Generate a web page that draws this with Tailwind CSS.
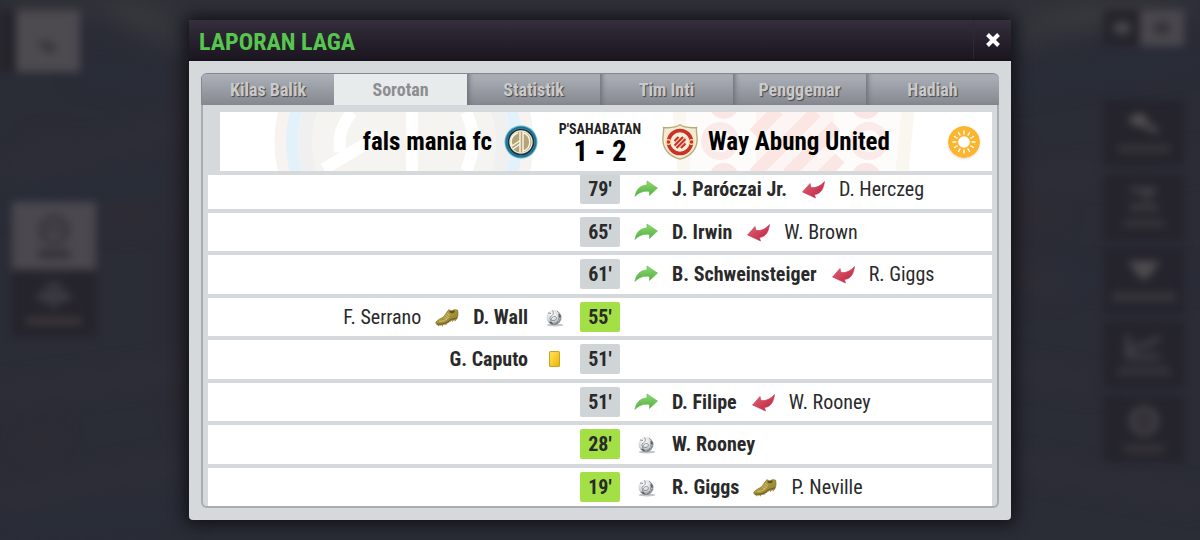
<!DOCTYPE html>
<html lang="id">
<head>
    <meta charset="UTF-8">
    <meta name="viewport" content="width=device-width, initial-scale=1.0">
    <title>Laporan Laga</title>
    <script src="https://cdn.jsdelivr.net/npm/@tailwindcss/browser@4"></script>
</head>
<body class="relative min-h-screen overflow-hidden bg-[#2a2c36] font-['Liberation_Sans_Narrow','Roboto_Condensed','Arial_Narrow',sans-serif]">

    <!-- icon symbols -->
    <svg class="absolute size-0" aria-hidden="true">
        <defs>
            <linearGradient id="g-green" x1="0" y1="0" x2="0" y2="1">
                <stop offset="0" stop-color="#8edb6c"/><stop offset="1" stop-color="#4fae3f"/>
            </linearGradient>
            <linearGradient id="g-red" x1="0" y1="0" x2="1" y2="1">
                <stop offset="0" stop-color="#e8637a"/><stop offset="1" stop-color="#b81f3c"/>
            </linearGradient>
            <linearGradient id="g-card" x1="0" y1="0" x2="1" y2="1">
                <stop offset="0" stop-color="#ffe45c"/><stop offset="1" stop-color="#f0b400"/>
            </linearGradient>
            <linearGradient id="g-boot" x1="0" y1="0" x2="1" y2="1">
                <stop offset="0" stop-color="#c0ad50"/><stop offset="1" stop-color="#8a7727"/>
            </linearGradient>
            <radialGradient id="g-ball" cx=".4" cy=".3" r=".75">
                <stop offset="0" stop-color="#fff"/><stop offset=".6" stop-color="#d4d6d9"/><stop offset="1" stop-color="#6d7076"/>
            </radialGradient>
        </defs>
        <symbol id="in" viewBox="0 0 24 24">
            <path d="M1 19.500C2 12.500 6 8.500 13 8V4L23.500 11L15.500 18.500V14.500C9.500 13.500 4.500 15.500 1 19.500Z" fill="url(#g-green)" stroke="#62b552" stroke-width=".6"/>
        </symbol>
        <symbol id="out" viewBox="0 0 24 24">
            <path d="M23.500 4.500C22.500 13 19 17 13.500 17.500L14.500 21L1.500 15L9 6.500L10 10.500C15 11 19.500 9 23.500 4.500Z" fill="url(#g-red)" stroke="#c04258" stroke-width=".6"/>
        </symbol>
        <symbol id="ball" viewBox="0 0 24 24">
            <ellipse cx="13" cy="20" rx="8.500" ry="1.500" fill="#9a9da0" opacity=".6"/>
            <circle cx="12" cy="12.500" r="7.500" fill="url(#g-ball)"/>
            <path d="M10.500 5.500C12 8 11.500 10 8.500 11.500M8.500 11.500C7 13.500 9 16 12 15.500S15 12 13 11.500S9 13 8.500 16M15 6C17.500 8 18.500 10 17 12.500S18 16 19 14.500M6 8L9 8.500M13 19C15 18.500 16 17.500 15.500 16" fill="none" stroke="#777b82" stroke-width=".8"/>
            <path d="M16.500 8.500L19 10.500L18.500 13L16.500 12ZM7 17L9.500 16.500L11.500 19.500C9.500 19.500 8 18.500 7 17Z" fill="#5d6168"/>
        </symbol>
        <symbol id="card" viewBox="0 0 24 24">
            <rect x="7" y="4" width="11" height="16" rx="1.500" fill="#c9a227"/>
            <rect x="8" y="5" width="9" height="14" rx="1" fill="url(#g-card)"/>
        </symbol>
        <symbol id="boot" viewBox="0 0 26 24">
            <path d="M1 17.500C3 14.500 7 13.500 9.500 11.500C11.500 9 13 6 15 4L18 5.500L21 4L24.500 4.500C25.500 8 25 12 23.500 14.500C21 16 18.500 15 16 17C12.500 20 7 21.500 2.500 20.500C1 20 .5 18.500 1 17.500Z" fill="url(#g-boot)" stroke="#7f7026" stroke-width=".6"/>
            <path d="M15.500 5.500C16 8 18.500 9 21.500 6.500L21 5Z" fill="#5f5319"/>
            <path d="M4.500 16.500C9 17 13 15 15 11.500M10 12L13 14.500M11.500 10L14.500 12.500M13 8L16 10.500" fill="none" stroke="#ddd08a" stroke-width=".9"/>
            <path d="M2 19.500C8 20.500 13 18.500 16.500 15C19 13.500 21.500 14.500 24 12.500" fill="none" stroke="#5f5319" stroke-width=".9"/>
            <path d="M4 21v1M8 21v1M12 19.500v1M19 16v1M22 15.500v1" stroke="#6f611f" stroke-width="1"/>
        </symbol>
    </svg>

    <!-- blurred game screen behind the dialog -->
    <div class="absolute inset-0" aria-hidden="true">
        <svg class="absolute inset-0 size-full blur-md" viewBox="0 0 1200 540" preserveAspectRatio="none" fill="none">
            <path d="M0 0H1200V12H0Z" fill="#3a393c"/>
            <path d="M100 0Q150 30 190 40M1200 0Q1080 20 1010 38" stroke="#3c3b3f" stroke-width="16"/>
            <path d="M0 170Q100 155 190 120M0 395Q80 385 190 368M0 500Q90 480 190 462M1010 180Q1100 175 1200 160M1010 370L1100 385M1010 462L1200 500" stroke="#35343c" stroke-width="7"/>
            <path d="M0 206Q90 186 190 180M80 74L190 87M1010 87L1200 57M0 530L190 510M1020 278H1200" stroke="#28313d" stroke-width="8"/>
            <path d="M30 150L60 140M100 220H160M1020 210L1060 217M1020 272L1060 292M20 448L60 438" stroke="#3b2e33" stroke-width="7"/>
            <path d="M184 60V420M1014 150V300" stroke="#33242a" stroke-width="8"/>
        </svg>
        <div class="absolute inset-0 flex justify-between blur-xs">
            <div class="flex w-24 flex-col pt-[10px]">
                <div class="flex h-[62px]">
                    <div class="w-4 bg-[#25232a]"></div>
                    <div class="flex w-16 items-center justify-center bg-[#4d4a50]">
                        <svg class="size-8" viewBox="0 0 32 32"><path d="M4 18L16 14L26 24L18 30Z" fill="#3a373d"/></svg>
                    </div>
                </div>
                <div class="mt-[130px] ml-3 flex h-[68px] flex-col items-center justify-center gap-1 bg-[#4b484f]">
                    <svg class="h-8 w-9" viewBox="0 0 36 32" fill="none" stroke="#36343b" stroke-width="5"><circle cx="18" cy="16" r="13"/><path d="M10 17L18 13L26 17"/></svg>
                    <div class="h-2 w-8 bg-[#333138]"></div>
                </div>
                <div class="ml-3 flex h-[66px] flex-col items-center justify-center gap-2 bg-[#25232b]">
                    <svg class="h-7 w-9" viewBox="0 0 36 28" fill="#3f3d45"><path d="M10 2H26V8H10ZM2 11H34V20H2ZM14 22H22V27H14Z"/></svg>
                    <div class="h-2 w-14 bg-[#3b3839]"></div>
                </div>
            </div>
            <div class="mr-4 flex w-20 flex-col gap-2 pt-[10px]">
                <div class="mb-[46px] flex h-9">
                    <div class="flex w-9 items-center justify-center bg-[#25232b]"><div class="h-3 w-4 bg-[#48464b]"></div></div>
                    <div class="flex flex-1 items-center justify-center bg-[#4b484f]"><div class="h-3 w-4 bg-[#353338]"></div></div>
                </div>
                <div class="flex h-[66px] flex-col items-center justify-center gap-3 bg-[#25232b]">
                    <svg class="h-5 w-9" viewBox="0 0 36 20" fill="#545154"><path d="M2 5L14 0L22 5L20 10L34 16L30 20L14 13L6 12Z"/></svg>
                    <div class="h-2 w-13 bg-[#37353b]"></div>
                </div>
                <div class="flex h-[66px] flex-col items-center justify-center gap-2 bg-[#25232b]">
                    <svg class="h-6 w-8" viewBox="0 0 32 24" stroke="#454349" stroke-width="5"><path d="M2 3H28M14 9H24M2 20H30"/></svg>
                    <div class="h-2 w-10 bg-[#37353b]"></div>
                </div>
                <div class="flex h-[66px] flex-col items-center justify-center gap-3 bg-[#25232b]">
                    <svg class="h-5 w-8" viewBox="0 0 32 20" fill="#4e4c50"><path d="M0 0H32L24 12L16 20L8 12Z"/></svg>
                    <div class="h-2 w-16 bg-[#3b393f]"></div>
                </div>
                <div class="flex h-[66px] flex-col items-center justify-center gap-2 bg-[#25232b]">
                    <svg class="h-6 w-9" viewBox="0 0 36 24" fill="none" stroke="#48464d" stroke-width="4"><path d="M2 0V22H34M4 16L16 9L20 11L34 2"/></svg>
                    <div class="h-2 w-13 bg-[#37353b]"></div>
                </div>
                <div class="flex h-[66px] flex-col items-center justify-center gap-2 bg-[#25232b]">
                    <svg class="size-8" viewBox="0 0 32 32" fill="none" stroke="#4a484d" stroke-width="5"><circle cx="16" cy="16" r="12"/><path d="M10 16H22"/></svg>
                    <div class="h-2 w-10 bg-[#37353b]"></div>
                </div>
            </div>
        </div>
    </div>

    <main role="dialog" aria-labelledby="title" class="relative mx-auto mt-5 w-[68.5%] rounded-sm bg-[#d5d9dc] shadow-[0_0_16px_4px_rgba(10,10,14,0.75)]">
        <header class="flex h-[41px] items-center justify-between border-b-2 border-[#17131c] bg-linear-to-b from-[#352e3d] to-[#1b1620] pl-[10px]">
            <h1 id="title" class="pt-1 text-2xl leading-8 font-bold text-[#56c64f]">LAPORAN LAGA</h1>
            <button type="button" aria-label="Tutup" class="flex h-full w-[38px] items-center justify-center border-l border-[#2e2735]">
                <svg class="size-4" viewBox="0 0 16 16" stroke="#fff" stroke-width="4"><path d="M2.500 2.500L13.500 13.500M13.500 2.500L2.500 13.500"/></svg>
            </button>
        </header>

        <div class="p-3">
            <nav class="grid h-8 grid-cols-6 overflow-hidden rounded-t-md border-t border-[#85888d] bg-linear-to-b from-[#adb1b9] to-[#85888f] text-lg font-bold text-[#c9cacc]">
                <button type="button" class="border-l border-[#85888d] text-shadow-[1px_1px_1px_#44464a]">Kilas Balik</button>
                <button type="button" aria-current="page" class="bg-[#e8ebec] text-[#8d8e90]">Sorotan</button>
                <button type="button" class="shadow-[inset_5px_0_5px_-3px_#6d7076] text-shadow-[1px_1px_1px_#44464a]">Statistik</button>
                <button type="button" class="shadow-[inset_5px_0_5px_-3px_#6d7076] text-shadow-[1px_1px_1px_#44464a]">Tim Inti</button>
                <button type="button" class="shadow-[inset_5px_0_5px_-3px_#6d7076] text-shadow-[1px_1px_1px_#44464a]">Penggemar</button>
                <button type="button" class="shadow-[inset_5px_0_5px_-3px_#6d7076] text-shadow-[1px_1px_1px_#44464a]">Hadiah</button>
            </nav>

            <div class="overflow-hidden rounded-b-md border-x-2 border-b-2 border-[#a9adb1] bg-[#d5d9dc] px-[5px] pt-[7px]">
                <!-- score line -->
                <section class="relative grid h-[59px] grid-cols-[1fr_124px_1fr] items-center">
                    <div class="absolute inset-y-0 right-0 left-3 overflow-hidden bg-white">
                        <svg class="absolute inset-y-0 left-[54px] h-full w-[260px]" viewBox="0 0 260 59" fill="none">
                            <circle cx="130" cy="30" r="123" stroke="#f6f3f0" stroke-width="13"/>
                            <circle cx="130" cy="30" r="112" stroke="#e3f1fb" stroke-width="12"/>
                            <circle cx="130" cy="30" r="99" fill="#f5f4f1" stroke="#f1f0f1" stroke-width="14"/>
                            <path d="M66 40C64 20 70 10 78 0M138 0V59M50 57L105 24M192 0Q206 28 192 59" stroke="#fff" stroke-width="12"/>
                        </svg>
                        <svg class="absolute inset-y-0 left-[450px] h-full w-[246px]" viewBox="0 0 246 59" fill="none">
                            <path d="M4 0H242L238 59H8Z" fill="#fefcfb"/>
                            <path d="M9 0L14 59M238 0L232 59" stroke="#f9f7ef" stroke-width="13"/>
                            <path d="M86 0H164V59H86Z" fill="#fdf5f3"/>
                            <g stroke="#fbe6e4" stroke-width="13"><path d="M84 22L108 -2M84 62L146 0M118 62L166 14M150 66L170 46"/></g>
                            <g fill="#fbe6e6"><circle cx="54" cy="-8" r="15"/><circle cx="54" cy="66" r="15"/><circle cx="196" cy="-8" r="15"/><circle cx="196" cy="66" r="15"/></g>
                            <g stroke="#fbeaea" stroke-width="8"><circle cx="50" cy="29" r="15"/><circle cx="199" cy="29" r="15"/></g>
                        </svg>
                    </div>
                    <div class="relative flex items-center justify-end gap-3">
                        <h2 class="text-[25px] leading-8 font-bold text-black">fals mania fc</h2>
                        <svg class="size-[34px]" viewBox="0 0 34 34" fill="none" aria-hidden="true">
                            <circle cx="17" cy="17" r="16.500" fill="#5fb5d3"/>
                            <circle cx="17" cy="17" r="14.500" stroke="#21708f" stroke-width="2"/>
                            <circle cx="17" cy="17" r="12.500" fill="#f1ead2" stroke="#18313f" stroke-width="1.600"/>
                            <circle cx="17" cy="17" r="10.500" fill="#b3a577"/>
                            <path d="M16 6.500V27.500M19 6.500V27.500M19 8C28 9 28 25 19 26M14 8C7 10 6 17 8 21L16 15.500M9 24L16 19" stroke="#fbf7e8" stroke-width="1.400"/>
                        </svg>
                    </div>
                    <div class="relative pt-0.5 text-center font-bold">
                        <p class="text-sm leading-4 text-[#222]">P'SAHABATAN</p>
                        <p class="text-[29px] leading-7 text-black">1 - 2</p>
                    </div>
                    <div class="relative flex items-center gap-[10px]">
                        <svg class="size-9" viewBox="0 0 36 36" fill="none" aria-hidden="true">
                            <path d="M18 .8C21 3 28 4 34.500 3.500C34 8 35 11 35.200 15C35 26 29 32 18 35.200C7 32 1 26 .8 15C1 11 2 8 1.500 3.500C8 4 15 3 18 .8Z" fill="#f3ecd2" stroke="#b9ab78" stroke-width="1.400"/>
                            <circle cx="18" cy="18" r="11.500" stroke="#cb3127" stroke-width="3.600"/>
                            <circle cx="18" cy="18" r="9" fill="#f5efdc"/>
                            <path d="M12.500 13H23.500V22.500L18 24L12.500 22.500Z" fill="#f0d9c0"/>
                            <path d="M12.500 17L16.500 13M12.500 21.500L21 13M14.500 24L23.500 15M19 24L23.500 19.500" stroke="#cb3127" stroke-width="2"/>
                            <g fill="#cb3127" stroke="#f0d59a" stroke-width="1.200"><circle cx="6.500" cy="18" r="2.400"/><circle cx="29.500" cy="18" r="2.400"/></g>
                        </svg>
                        <h2 class="text-[25px] leading-8 font-bold text-black">Way Abung United</h2>
                        <svg class="mr-3 ml-auto size-8 rounded-full shadow" viewBox="0 0 32 32" role="img" aria-label="Cerah">
                            <circle cx="16" cy="16" r="16" fill="#fbb52f"/>
                            <circle cx="16" cy="16" r="5.800" fill="#fff"/>
                            <path d="M16 5V8M16 24V27M5 16H8M24 16H27M10.500 6.500L12 9.100M21.500 6.500L20 9.100M10.500 25.500L12 22.900M21.500 25.500L20 22.900M6.500 10.500L9.100 12M25.500 10.500L22.900 12M6.500 21.500L9.100 20M25.500 21.500L22.900 20" stroke="#fff" stroke-width="1.400" stroke-linecap="round"/>
                        </svg>
                    </div>
                </section>

                <!-- events, scrolled to the end -->
                <div class="mt-1 flex h-[331px] flex-col justify-end overflow-hidden">
                    <ol class="grid h-[340px] shrink-0 auto-rows-fr text-xl leading-7 text-[#2a2a2a]">
                        <li class="grid grid-cols-[1fr_40px_1fr] items-center border-t-4 border-[#d5d9dc] bg-white">
                            <time class="col-start-2 rounded-xs bg-[#cfd4d7] text-center leading-[30px] font-bold">79'</time>
                            <div class="flex items-center gap-[14px] pl-[14px]">
                                <svg class="size-6"><use href="#in"/></svg><b>J. Paróczai Jr.</b>
                                <svg class="size-6"><use href="#out"/></svg><span>D. Herczeg</span>
                            </div>
                        </li>
                        <li class="grid grid-cols-[1fr_40px_1fr] items-center border-t-4 border-[#d5d9dc] bg-white">
                            <time class="col-start-2 rounded-xs bg-[#cfd4d7] text-center leading-[30px] font-bold">65'</time>
                            <div class="flex items-center gap-[14px] pl-[14px]">
                                <svg class="size-6"><use href="#in"/></svg><b>D. Irwin</b>
                                <svg class="size-6"><use href="#out"/></svg><span>W. Brown</span>
                            </div>
                        </li>
                        <li class="grid grid-cols-[1fr_40px_1fr] items-center border-t-4 border-[#d5d9dc] bg-white">
                            <time class="col-start-2 rounded-xs bg-[#cfd4d7] text-center leading-[30px] font-bold">61'</time>
                            <div class="flex items-center gap-[14px] pl-[14px]">
                                <svg class="size-6"><use href="#in"/></svg><b>B. Schweinsteiger</b>
                                <svg class="size-6"><use href="#out"/></svg><span>R. Giggs</span>
                            </div>
                        </li>
                        <li class="grid grid-cols-[1fr_40px_1fr] items-center border-t-4 border-[#d5d9dc] bg-white">
                            <div class="flex items-center justify-end gap-[14px] pr-[14px]">
                                <span>F. Serrano</span><svg class="size-6"><use href="#boot"/></svg>
                                <b>D. Wall</b><svg class="size-6"><use href="#ball"/></svg>
                            </div>
                            <time class="rounded-xs bg-[#a2e045] text-center leading-[30px] font-bold">55'</time>
                        </li>
                        <li class="grid grid-cols-[1fr_40px_1fr] items-center border-t-4 border-[#d5d9dc] bg-white">
                            <div class="flex items-center justify-end gap-[14px] pr-[14px]">
                                <b>G. Caputo</b><svg class="size-6"><use href="#card"/></svg>
                            </div>
                            <time class="rounded-xs bg-[#cfd4d7] text-center leading-[30px] font-bold">51'</time>
                        </li>
                        <li class="grid grid-cols-[1fr_40px_1fr] items-center border-t-4 border-[#d5d9dc] bg-white">
                            <time class="col-start-2 rounded-xs bg-[#cfd4d7] text-center leading-[30px] font-bold">51'</time>
                            <div class="flex items-center gap-[14px] pl-[14px]">
                                <svg class="size-6"><use href="#in"/></svg><b>D. Filipe</b>
                                <svg class="size-6"><use href="#out"/></svg><span>W. Rooney</span>
                            </div>
                        </li>
                        <li class="grid grid-cols-[1fr_40px_1fr] items-center border-t-4 border-[#d5d9dc] bg-white">
                            <time class="col-start-2 rounded-xs bg-[#a2e045] text-center leading-[30px] font-bold">28'</time>
                            <div class="flex items-center gap-[14px] pl-[14px]">
                                <svg class="size-6"><use href="#ball"/></svg><b>W. Rooney</b>
                            </div>
                        </li>
                        <li class="grid grid-cols-[1fr_40px_1fr] items-center border-t-4 border-[#d5d9dc] bg-white">
                            <time class="col-start-2 rounded-xs bg-[#a2e045] text-center leading-[30px] font-bold">19'</time>
                            <div class="flex items-center gap-[14px] pl-[14px]">
                                <svg class="size-6"><use href="#ball"/></svg><b>R. Giggs</b>
                                <svg class="size-6"><use href="#boot"/></svg><span>P. Neville</span>
                            </div>
                        </li>
                    </ol>
                </div>
            </div>
        </div>
    </main>
</body>
</html>
